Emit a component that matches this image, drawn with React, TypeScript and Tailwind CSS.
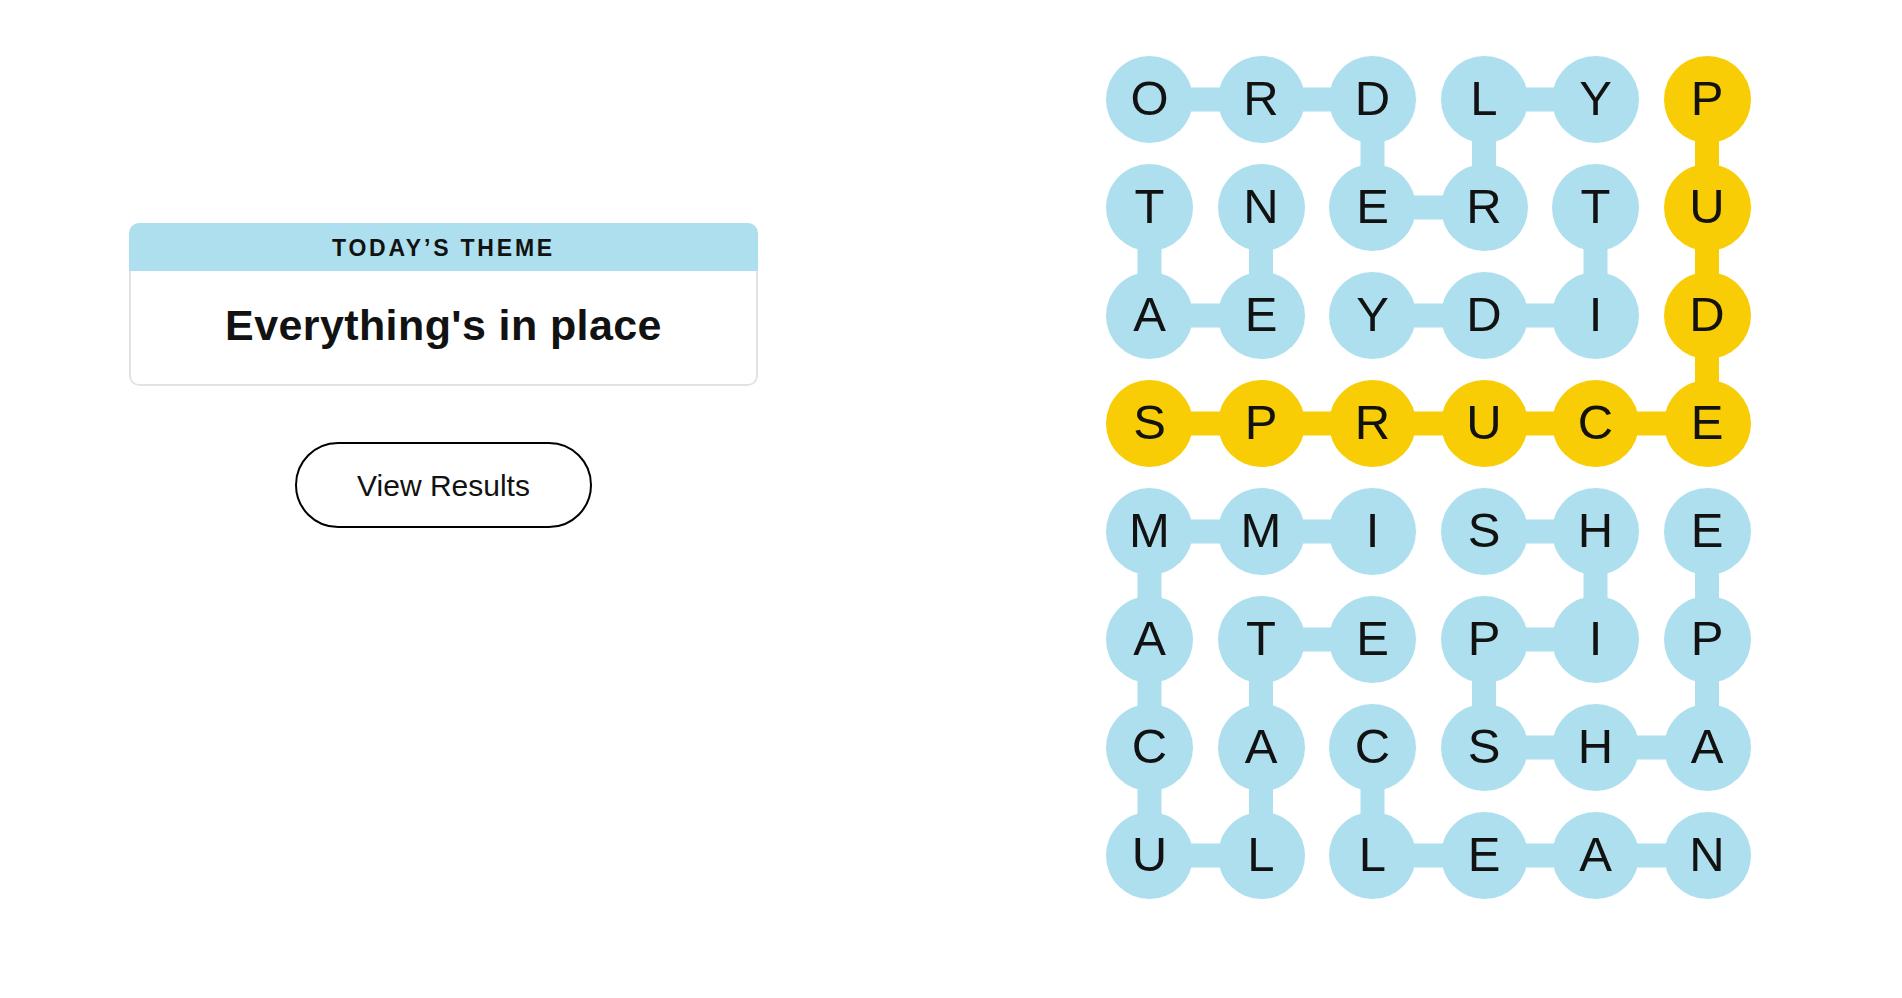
import React from 'react';

const ROWS = [
  'ORDLYP',
  'TNERTU',
  'AEYDID',
  'SPRUCE',
  'MMISHE',
  'ATEPIP',
  'CACSHA',
  'ULLEAN',
];

// cells on the found spangram
const YELLOW = new Set(['0-5', '1-5', '2-5', '3-0', '3-1', '3-2', '3-3', '3-4', '3-5']);

// [row, col, row, col] pairs joined on the board
const LINKS: [number, number, number, number][] = [
  // ORDERLY
  [0, 0, 0, 1], [0, 1, 0, 2], [0, 2, 1, 2], [1, 2, 1, 3], [1, 3, 0, 3], [0, 3, 0, 4],
  // NEAT
  [1, 1, 2, 1], [2, 1, 2, 0], [2, 0, 1, 0],
  // TIDY
  [1, 4, 2, 4], [2, 4, 2, 3], [2, 3, 2, 2],
  // IMMACULATE
  [4, 2, 4, 1], [4, 1, 4, 0], [4, 0, 5, 0], [5, 0, 6, 0], [6, 0, 7, 0], [7, 0, 7, 1], [7, 1, 6, 1], [6, 1, 5, 1], [5, 1, 5, 2],
  // SHIPSHAPE
  [4, 3, 4, 4], [4, 4, 5, 4], [5, 4, 5, 3], [5, 3, 6, 3], [6, 3, 6, 4], [6, 4, 6, 5], [6, 5, 5, 5], [5, 5, 4, 5],
  // CLEAN
  [6, 2, 7, 2], [7, 2, 7, 3], [7, 3, 7, 4], [7, 4, 7, 5],
  // SPRUCEDUP
  [3, 0, 3, 1], [3, 1, 3, 2], [3, 2, 3, 3], [3, 3, 3, 4], [3, 4, 3, 5], [3, 5, 2, 5], [2, 5, 1, 5], [1, 5, 0, 5],
];

const cx = (c: number) => 43.5 + c * 111.5;
const cy = (r: number) => 43.5 + r * 108;

function Board() {
  return (
    <div className="relative w-[645px]">
      <svg className="absolute inset-0 w-full h-full" width="645" height="843">
        {LINKS.map(([r1, c1, r2, c2], i) => (
          <line
            key={i}
            x1={cx(c1)}
            y1={cy(r1)}
            x2={cx(c2)}
            y2={cy(r2)}
            stroke={YELLOW.has(`${r1}-${c1}`) && YELLOW.has(`${r2}-${c2}`) ? '#f8cd05' : '#aedfee'}
            strokeWidth={24}
          />
        ))}
      </svg>
      <div className="relative grid grid-cols-[repeat(6,87px)] gap-x-[24.5px] gap-y-[21px]">
        {ROWS.map((row, r) =>
          row.split('').map((ch, c) => (
            <div
              key={`${r}-${c}`}
              className={
                'w-[87px] h-[87px] rounded-full flex items-center justify-center pb-[3px] text-[49px] leading-none text-[#121212] ' +
                (YELLOW.has(`${r}-${c}`) ? 'bg-[#f8cd05]' : 'bg-[#aedfee]')
              }
            >
              {ch}
            </div>
          ))
        )}
      </div>
    </div>
  );
}

export default function App() {
  return (
    <div className="min-h-screen bg-white flex font-['Liberation_Sans',Arial,sans-serif] text-[#121212]">
      <div className="w-[887px] shrink-0 flex flex-col items-center pt-[223px]">
        <div className="w-[629px] rounded-[10px] overflow-hidden">
          <div className="h-[48px] bg-[#aedfee] flex items-center justify-center pt-[2px]">
            <span className="text-[23px] font-bold tracking-[2.8px] uppercase">Today’s Theme</span>
          </div>
          <div className="h-[115px] border-2 border-t-0 border-[#e2e2e2] rounded-b-[10px] flex items-center justify-center pb-[4px]">
            <h1 className="text-[43px] font-bold tracking-[0.4px]">Everything's in place</h1>
          </div>
        </div>
        <button className="mt-[56px] w-[297px] h-[86px] rounded-full border-2 border-black bg-white text-[30px] flex items-center justify-center">
          View Results
        </button>
      </div>
      <div className="ml-[219px] pt-[56px]">
        <Board />
      </div>
    </div>
  );
}
